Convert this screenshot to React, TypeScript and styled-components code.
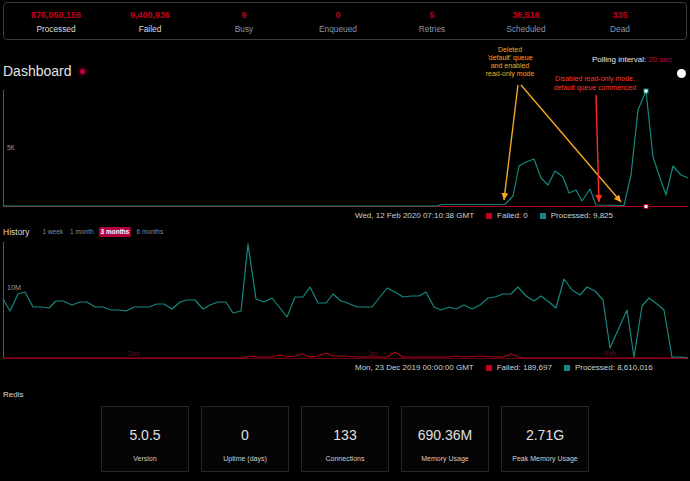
import styled, { createGlobalStyle } from "styled-components";

const RED = "#c4001a";
const TEAL = "#16877f";
const FONT = `"Liberation Sans", Arial, sans-serif`;

const GlobalStyle = createGlobalStyle`
  html, body {
    margin: 0;
    background: #000;
    font-family: ${FONT};
  }
`;

type Pt = [number, number];

const stats = [
  { value: "876,050,156", label: "Processed", muted: false },
  { value: "9,400,936", label: "Failed", muted: false },
  { value: "9", label: "Busy", muted: true },
  { value: "0", label: "Enqueued", muted: true },
  { value: "5", label: "Retries", muted: true },
  { value: "36,516", label: "Scheduled", muted: true },
  { value: "335", label: "Dead", muted: true },
];

const redis = [
  { value: "5.0.5", label: "Version" },
  { value: "0", label: "Uptime (days)" },
  { value: "133", label: "Connections" },
  { value: "690.36M", label: "Memory Usage" },
  { value: "2.71G", label: "Peak Memory Usage" },
];

// page coordinates, shifted by chart top when drawn
const liveProcessed: Pt[] = [
  [3, 206], [437, 206], [442, 204.5], [505, 204.5], [513, 196], [519, 166], [526, 162],
  [534, 159], [541, 178], [548, 185], [555, 171], [563, 177], [569, 193], [576, 190],
  [582, 201], [590, 189], [596, 205], [624, 205.5], [631, 175], [638, 110], [646, 91],
  [653, 157], [659, 175], [666, 195], [673, 166], [681, 175], [688, 178],
];
const liveFailed: Pt[] = [[3, 206.5], [688, 206.5]];

const histProcessed: Pt[] = [
  [3, 299], [10, 311], [18, 294], [25, 292], [33, 307], [41, 307], [49, 308], [56, 301],
  [63, 301], [72, 305], [80, 302], [87, 302], [95, 307], [103, 307], [111, 310], [119, 310],
  [126, 311], [134, 307], [142, 307], [149, 307], [157, 304], [164, 304], [172, 309],
  [180, 302], [187, 300], [195, 300], [203, 309], [210, 305], [218, 302], [226, 302],
  [233, 313], [241, 311], [248, 244], [256, 299], [264, 302], [272, 298], [280, 308],
  [287, 317], [295, 297], [303, 297], [310, 287], [318, 303], [326, 303], [333, 294],
  [341, 301], [345, 302], [357, 307], [372, 307], [387, 288], [395, 292], [403, 297],
  [411, 296], [419, 296], [426, 292], [434, 307], [441, 310], [449, 307], [456, 309],
  [464, 305], [472, 309], [480, 305], [488, 298], [495, 297], [503, 294], [511, 294],
  [518, 287], [526, 296], [534, 301], [541, 296], [549, 302], [556, 308], [564, 279],
  [572, 290], [580, 295], [587, 287], [595, 291], [603, 300], [610, 348], [618, 330],
  [627, 310], [634, 357], [642, 306], [649, 298], [657, 304], [664, 310], [672, 357],
  [680, 357], [688, 358],
];
const histFailed: Pt[] = [
  [3, 358], [242, 358], [250, 356], [257, 357], [265, 357], [272, 357], [280, 355],
  [287, 357], [295, 356], [302, 354], [310, 357], [318, 356], [326, 353], [333, 356],
  [345, 356], [357, 357], [372, 357], [387, 357], [395, 352], [403, 357], [426, 357],
  [449, 357], [456, 356], [464, 357], [480, 356], [495, 357], [503, 357], [511, 354],
  [518, 357], [526, 358], [688, 358],
];

const pts = (list: Pt[], top: number) =>
  list.map(([x, y]) => `${x},${y - top}`).join(" ");

interface ChartProps {
  top: number;
  axisLabel: string;
  labelY: number;
  labelSize: number;
  processed: Pt[];
  failed: Pt[];
  baseline: number;
  months?: { x: number; text: string }[];
  marker?: number;
}

const LineChart = ({ top, axisLabel, labelY, labelSize, processed, failed, baseline, months, marker }: ChartProps) => (
  <ChartBox>
    <svg width="690" height="124" viewBox="0 0 690 124">
      <line x1="3.5" y1="4" x2="3.5" y2={baseline - top} stroke="#555" strokeWidth="1" />
      <line x1="3" y1={baseline - top + 0.5} x2="688" y2={baseline - top + 0.5} stroke="#6a0010" strokeWidth="1" />
      <text x="7" y={labelY - top + 2.5} fill="#9a9a9a" fontSize={labelSize} fontFamily={FONT}>
        {axisLabel}
      </text>
      {months?.map((m) => (
        <text key={m.text} x={m.x} y={353 - top + 2.5} fill="#6e0a18" fontSize="6.5" fontFamily={FONT}>
          {m.text}
        </text>
      ))}
      <polyline points={pts(failed, top)} fill="none" stroke="#b0001a" strokeWidth="1.2" strokeLinejoin="round" />
      <polyline points={pts(processed, top)} fill="none" stroke={TEAL} strokeWidth="1.2" strokeLinejoin="round" />
      {marker !== undefined && (
        <>
          <rect x={marker - 2} y={91 - top - 2} width="4" height="4" fill="#fff" stroke={TEAL} strokeWidth="1" />
          <rect x={marker - 2} y={baseline - top - 1.5} width="4" height="4" fill="#fff" stroke="#b0001a" strokeWidth="1" />
        </>
      )}
    </svg>
  </ChartBox>
);

const LegendRow = ({ date, failed, processed }: { date: string; failed: string; processed: string }) => (
  <Legend>
    <span>{date}</span>
    <LegendItem>
      <Swatch $color={RED} />
      Failed: {failed}
    </LegendItem>
    <LegendItem>
      <Swatch $color={TEAL} />
      Processed: {processed}
    </LegendItem>
  </Legend>
);

export default function App() {
  return (
    <Page>
      <GlobalStyle />
      <StatsBar>
        {stats.map((s) => (
          <StatCell key={s.label}>
            <StatValue>{s.value}</StatValue>
            <StatLabel $muted={s.muted}>{s.label}</StatLabel>
          </StatCell>
        ))}
      </StatsBar>

      <Realtime>
        <Header>
          <Title>
            Dashboard
            <LiveDot />
          </Title>
          <Polling>
            <PollText>
              Polling interval: <PollValue>20 sec</PollValue>
            </PollText>
            <Toggle />
          </Polling>
        </Header>
        <LineChart
          top={86}
          axisLabel="5K"
          labelY={147}
          labelSize={6.5}
          processed={liveProcessed}
          failed={liveFailed}
          baseline={206}
          marker={646}
        />
        <LegendRow date="Wed, 12 Feb 2020 07:10:38 GMT" failed="0" processed="9,825" />

        <Arrows width="690" height="181" viewBox="0 0 690 181">
          <defs>
            <marker id="headOrange" markerUnits="userSpaceOnUse" markerWidth="8" markerHeight="8" refX="7" refY="3.5" orient="auto">
              <path d="M0,0 L7,3.5 L0,7 z" fill="#f5a623" />
            </marker>
            <marker id="headRed" markerUnits="userSpaceOnUse" markerWidth="8" markerHeight="8" refX="7" refY="3.5" orient="auto">
              <path d="M0,0 L7,3.5 L0,7 z" fill="#ff2d20" />
            </marker>
          </defs>
          <line x1="518" y1="45" x2="504" y2="160" stroke="#f5a623" strokeWidth="1.4" markerEnd="url(#headOrange)" />
          <line x1="521" y1="45" x2="621" y2="162" stroke="#f5a623" strokeWidth="1.4" markerEnd="url(#headOrange)" />
          <line x1="596" y1="55" x2="599" y2="162" stroke="#ff2d20" strokeWidth="1.4" markerEnd="url(#headRed)" />
        </Arrows>
        <Note $color="#f5a623" $left={460} $top={6} $width={100} $lh={8}>
          Deleted
          <br />
          'default' queue
          <br />
          and enabled
          <br />
          read-only mode
        </Note>
        <Note $color="#ff3b2a" $left={535} $top={33.5} $width={120} $lh={9}>
          Disabled read-only mode.
          <br />
          default queue commenced
        </Note>
      </Realtime>

      <HistoryHeader>
        <SectionTitle>History</SectionTitle>
        <Tabs>
          <Tab>1 week</Tab>
          <Tab>1 month</Tab>
          <Tab $active>3 months</Tab>
          <Tab>6 months</Tab>
        </Tabs>
      </HistoryHeader>
      <LineChart
        top={238}
        axisLabel="10M"
        labelY={287}
        labelSize={7.2}
        processed={histProcessed}
        failed={histFailed}
        baseline={358}
        months={[
          { x: 128, text: "Dec" },
          { x: 367, text: "Jan" },
          { x: 605, text: "Feb" },
        ]}
      />
      <LegendRow date="Mon, 23 Dec 2019 00:00:00 GMT" failed="189,697" processed="8,610,016" />

      <RedisTitle>Redis</RedisTitle>
      <Cards>
        {redis.map((r) => (
          <Card key={r.label}>
            <CardValue>{r.value}</CardValue>
            <CardLabel>{r.label}</CardLabel>
          </Card>
        ))}
      </Cards>
    </Page>
  );
}

const Page = styled.div`
  width: 690px;
  height: 481px;
  overflow: hidden;
  background: #000;
  color: #ddd;
`;

const StatsBar = styled.div`
  margin: 2px 3px 0;
  height: 38px;
  box-sizing: border-box;
  border: 1px solid #3a3a3a;
  border-radius: 4px;
  display: grid;
  grid-template-columns: repeat(7, 1fr);
  padding: 0 19px 0 5px;
`;

const StatCell = styled.div`
  display: flex;
  flex-direction: column;
  align-items: center;
  padding-top: 7px;
  gap: 3px;
`;

const StatValue = styled.div`
  color: ${RED};
  font-size: 9px;
  font-weight: bold;
  line-height: 11px;
`;

const StatLabel = styled.div<{ $muted?: boolean }>`
  color: ${(p) => (p.$muted ? "#8797aa" : "#dcdcdc")};
  font-size: 8.3px;
  line-height: 11px;
`;

const Realtime = styled.div`
  position: relative;
`;

const Header = styled.div`
  height: 46px;
  display: flex;
  justify-content: space-between;
  padding: 0 4px 0 3px;
`;

const Title = styled.div`
  padding-top: 22px;
  font-size: 14px;
  line-height: 18px;
  color: #e2e2e2;
  display: flex;
  align-items: flex-start;
`;

const LiveDot = styled.span`
  width: 5px;
  height: 5px;
  border-radius: 50%;
  background: #c4003b;
  box-shadow: 0 0 4px 1px rgba(196, 0, 59, 0.6);
  margin: 6.5px 0 0 8px;
`;

const Polling = styled.div`
  display: flex;
  flex-direction: column;
  align-items: flex-end;
  padding-top: 15px;
`;

const PollText = styled.div`
  font-size: 8px;
  line-height: 10px;
  color: #e6e6e6;
  margin-right: 14px;
`;

const PollValue = styled.span`
  color: #c4003b;
`;

const Toggle = styled.div`
  width: 9px;
  height: 9px;
  border-radius: 50%;
  background: #fff;
  margin-top: 3.5px;
`;

const ChartBox = styled.div`
  height: 124px;
  & svg {
    display: block;
  }
`;

const Legend = styled.div`
  height: 11px;
  display: flex;
  align-items: center;
  gap: 12px;
  padding-left: 355px;
  font-size: 8px;
  color: #d0d0d0;
  white-space: nowrap;
`;

const LegendItem = styled.span`
  display: flex;
  align-items: center;
  gap: 5px;
`;

const Swatch = styled.span<{ $color: string }>`
  width: 6px;
  height: 6px;
  background: ${(p) => p.$color};
`;

const Arrows = styled.svg`
  position: absolute;
  left: 0;
  top: 0;
  pointer-events: none;
`;

const Note = styled.div<{ $color: string; $left: number; $top: number; $width: number; $lh: number }>`
  position: absolute;
  left: ${(p) => p.$left}px;
  top: ${(p) => p.$top}px;
  width: ${(p) => p.$width}px;
  text-align: center;
  font-size: 7px;
  line-height: ${(p) => p.$lh}px;
  color: ${(p) => p.$color};
`;

const HistoryHeader = styled.div`
  height: 17px;
  box-sizing: border-box;
  padding: 5px 0 0 3px;
  display: flex;
  align-items: center;
  gap: 11px;
`;

const SectionTitle = styled.div`
  font-size: 8.5px;
  line-height: 12px;
  color: #dcdcdc;
`;

const Tabs = styled.div`
  display: flex;
  align-items: center;
  gap: 3px;
`;

const Tab = styled.span<{ $active?: boolean }>`
  font-size: 6.5px;
  line-height: 10px;
  padding: 0 2px;
  border-radius: 2px;
  color: ${(p) => (p.$active ? "#fff" : "#7d8fa3")};
  background: ${(p) => (p.$active ? "#b1003e" : "transparent")};
  font-weight: ${(p) => (p.$active ? "bold" : "normal")};
`;

const RedisTitle = styled.div`
  margin-top: 16px;
  padding-left: 3px;
  font-size: 8px;
  line-height: 12px;
  color: #dcdcdc;
`;

const Cards = styled.div`
  margin-top: 5px;
  display: flex;
  justify-content: center;
  gap: 12px;
`;

const Card = styled.div`
  width: 88px;
  height: 66px;
  box-sizing: border-box;
  border: 1px solid #262626;
  background: #050505;
  display: flex;
  flex-direction: column;
  align-items: center;
  padding-top: 20px;
`;

const CardValue = styled.div`
  font-size: 14px;
  line-height: 16px;
  color: #e0e0e0;
`;

const CardLabel = styled.div`
  margin-top: 11px;
  font-size: 7px;
  line-height: 9px;
  color: #cfcfcf;
`;
